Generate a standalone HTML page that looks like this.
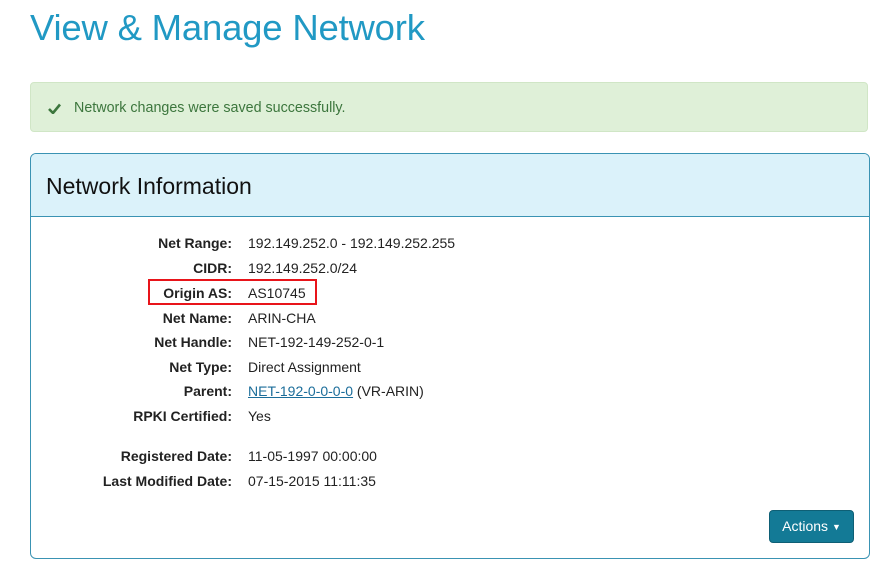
<!DOCTYPE html>
<html><head><style>
body{margin:0;background:#fff;font-family:"Liberation Sans",sans-serif;width:880px;height:570px;overflow:hidden;position:relative}
h1{position:absolute;left:30px;top:7px;margin:0;font-size:36.5px;font-weight:normal;color:#2199c4;letter-spacing:-0.2px}
.alert{position:absolute;left:30px;top:82px;width:838px;height:50px;background:#dff0d8;border:1px solid #d0e6c6;border-radius:4px;box-sizing:border-box;color:#3c763d;font-size:14.3px}
.alert span{position:absolute;left:43px;top:17px}
.alert svg{position:absolute;left:17px;top:20px}
.panel{position:absolute;left:30px;top:153px;width:840px;height:406px;border:1px solid #3a93b3;border-radius:6px;box-sizing:border-box;overflow:hidden}
.ph{height:63px;background:#dbf2fa;border-bottom:1px solid #3a93b3;box-sizing:border-box}
.ph span{position:absolute;left:15px;top:19px;font-size:23px;color:#111}
.row{position:absolute;left:0;right:0;height:20px;font-size:14px;color:#222}
.l{position:absolute;right:637px;font-weight:bold;white-space:nowrap}
.v{position:absolute;left:217px;white-space:nowrap}
a{color:#1b6d9a;text-decoration:underline}
.btn{position:absolute;left:738px;top:356px;width:85px;height:33px;background:#137a96;border:1px solid #0e5f75;border-radius:4px;box-sizing:border-box;color:#fff;font-size:14px;line-height:31px;text-align:center}
.box{position:absolute;left:148px;top:279px;width:169px;height:26px;border:2px solid #e8141a;box-sizing:border-box}
</style></head><body>
<h1>View &amp; Manage Network</h1>
<div class="alert"><svg width="13" height="11" viewBox="0 0 13 11"><path d="M1 6l4 4L12 1.5" stroke="#3c763d" stroke-width="2.6" fill="none"/></svg><span>Network changes were saved successfully.</span></div>
<div class="panel"><div class="ph"><span>Network Information</span></div>
<div class="row" style="top:81px"><span class="l">Net Range:</span><span class="v">192.149.252.0 - 192.149.252.255</span></div>
<div class="row" style="top:106px"><span class="l">CIDR:</span><span class="v">192.149.252.0/24</span></div>
<div class="row" style="top:131px"><span class="l">Origin AS:</span><span class="v">AS10745</span></div>
<div class="row" style="top:156px"><span class="l">Net Name:</span><span class="v">ARIN-CHA</span></div>
<div class="row" style="top:180px"><span class="l">Net Handle:</span><span class="v">NET-192-149-252-0-1</span></div>
<div class="row" style="top:205px"><span class="l">Net Type:</span><span class="v">Direct Assignment</span></div>
<div class="row" style="top:229px"><span class="l">Parent:</span><span class="v"><a>NET-192-0-0-0-0</a> (VR-ARIN)</span></div>
<div class="row" style="top:254px"><span class="l">RPKI Certified:</span><span class="v">Yes</span></div>
<div class="row" style="top:294px"><span class="l">Registered Date:</span><span class="v">11-05-1997 00:00:00</span></div>
<div class="row" style="top:319px"><span class="l">Last Modified Date:</span><span class="v">07-15-2015 11:11:35</span></div>
<div class="btn">Actions <span style="font-size:9px;position:relative;top:-1px">▼</span></div>
</div>
<div class="box"></div>
</body></html>
